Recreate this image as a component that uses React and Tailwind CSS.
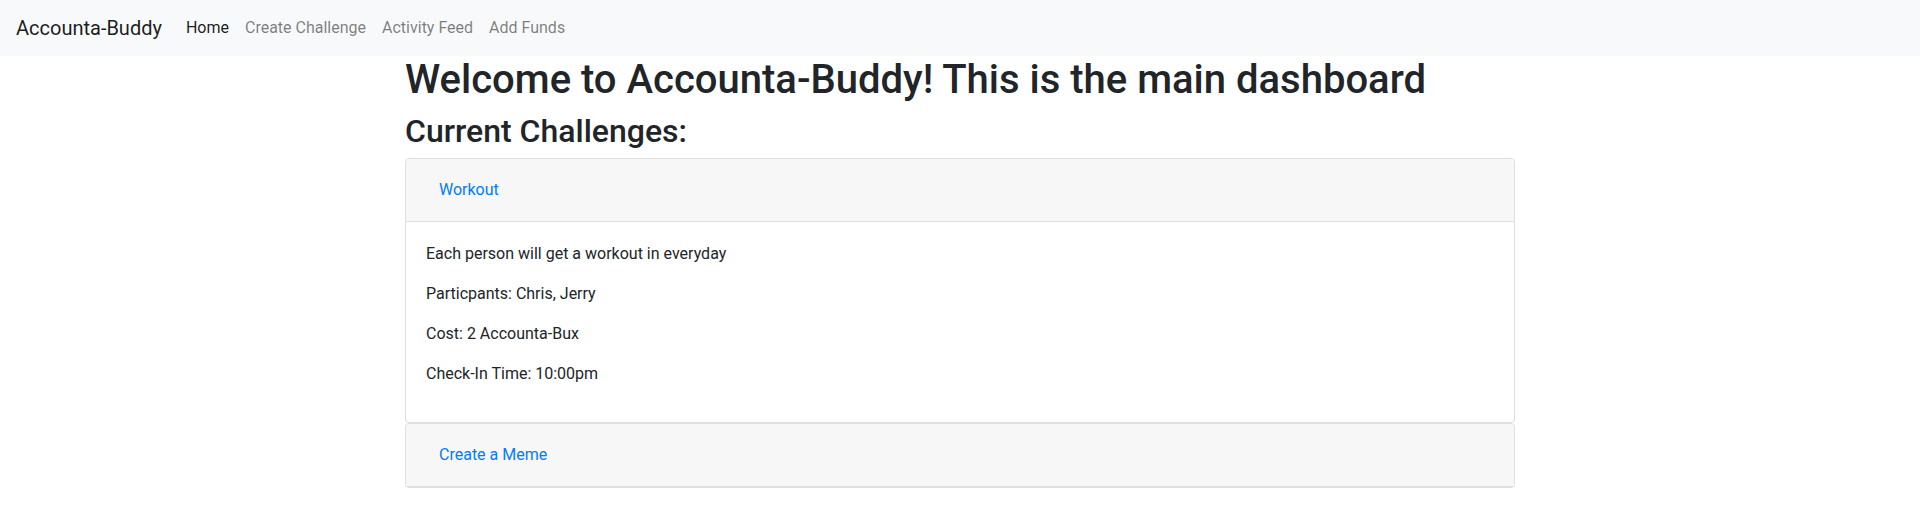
import React from "react";

function Card({ title, children }) {
  return (
    <div className="rounded border border-[#dfdfdf] bg-white">
      <div className="rounded-t border-b border-[#dfdfdf] bg-[#f7f7f7] px-5 py-3">
        <button className="border border-transparent px-3 py-1.5 text-base leading-6 text-[#007bff]">
          {title}
        </button>
      </div>
      {children}
    </div>
  );
}

export default function App() {
  return (
    <div className="min-h-screen bg-white text-[#212529]" style={{ fontFamily: "Roboto, 'Noto Sans', sans-serif" }}>
      <nav className="flex h-14 items-center bg-[#f8f9fa] px-4 py-2">
        <a className="mr-4 py-[5px] text-xl leading-[30px] text-black/90">Accounta-Buddy</a>
        <div className="flex">
          <a className="px-2 py-2 text-base leading-6 text-black/90">Home</a>
          <a className="px-2 py-2 text-base leading-6 text-black/50">Create Challenge</a>
          <a className="px-2 py-2 text-base leading-6 text-black/50">Activity Feed</a>
          <a className="px-2 py-2 text-base leading-6 text-black/50">Add Funds</a>
        </div>
      </nav>
      <div className="mx-auto max-w-[1140px] px-[15px]">
        <h1 className="mb-2 text-[40px] font-medium leading-[48px]">
          Welcome to Accounta-Buddy! This is the main dashboard
        </h1>
        <h2 className="mb-2 text-[32px] font-medium leading-[38.4px]">Current Challenges:</h2>
        <div className="flex flex-col">
          <Card title="Workout">
            <div className="p-5 text-base leading-6">
              <p className="mb-4">Each person will get a workout in everyday</p>
              <p className="mb-4">Particpants: Chris, Jerry</p>
              <p className="mb-4">Cost: 2 Accounta-Bux</p>
              <p className="mb-4">Check-In Time: 10:00pm</p>
            </div>
          </Card>
          <Card title="Create a Meme" />
        </div>
      </div>
    </div>
  );
}
